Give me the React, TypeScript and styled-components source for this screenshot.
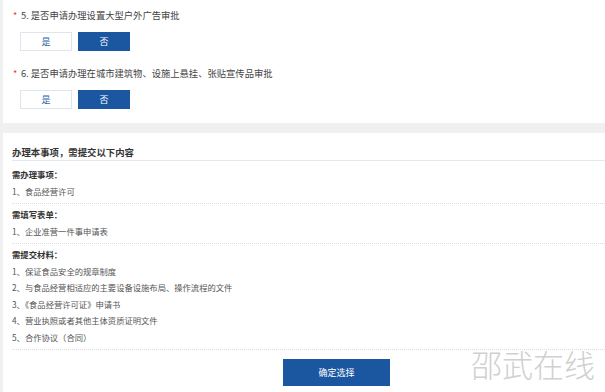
import { ReactElement } from 'react';
import styled, { createGlobalStyle } from 'styled-components';

const GlobalStyle = createGlobalStyle`
  html, body {
    margin: 0;
    padding: 0;
    background: #f0f0f0;
    font-family: "Noto Sans CJK SC", "Noto Sans", sans-serif;
    color: #333;
  }
`;

const Page = styled.div`
  position: relative;
  width: 605px;
  height: 392px;
  overflow: hidden;
  padding-left: 3px;
  box-sizing: border-box;
`;

const Card = styled.div`
  background: #fff;
`;

const QuestionCard = styled(Card)`
  height: 123px;
  padding: 8px 0 0 10px;
  box-sizing: border-box;
  margin-bottom: 10px;
`;

const Question = styled.div`
  margin-bottom: 15px;
`;

const QuestionTitle = styled.div`
  display: flex;
  align-items: center;
  height: 14px;
  font-size: 9.3px;
  color: #444;

  .star {
    color: #e5383b;
    width: 8px;
    font-size: 9px;
  }
`;

const Options = styled.div`
  display: flex;
  gap: 6px;
  margin: 10px 0 0 7px;
`;

const OptionButton = styled.button<{ $active?: boolean }>`
  width: 52px;
  height: 19px;
  padding: 0;
  font-family: inherit;
  font-size: 9px;
  border: 1px solid ${(p) => (p.$active ? '#1b56a1' : '#dfe5ec')};
  background: ${(p) => (p.$active ? '#1b56a1' : '#fff')};
  color: ${(p) => (p.$active ? '#fff' : '#2c63a8')};
`;

const InfoCard = styled(Card)`
  height: 259px;
  padding: 12px 0 0 9px;
  box-sizing: border-box;
`;

const Heading = styled.div`
  font-size: 9.4px;
  font-weight: bold;
  color: #333;
  line-height: 14px;
  padding-bottom: 1px;
  border-bottom: 1.5px solid #e2e9f1;
`;

const Section = styled.div<{ $first?: boolean }>`
  padding: ${(p) => (p.$first ? '5px' : '2px')} 0 4px;
  border-bottom: 1px dotted #dcdcdc;
`;

const SectionTitle = styled.div`
  font-size: 8.4px;
  font-weight: bold;
  color: #333;
  line-height: 16.5px;
`;

const Item = styled.div`
  font-size: 8.3px;
  color: #555;
  line-height: 16.5px;
`;

const Footer = styled.div`
  padding: 7px 0 0 271px;
`;

const ConfirmButton = styled.button`
  width: 107px;
  height: 27px;
  border: none;
  background: #1b56a1;
  color: #fff;
  font-family: inherit;
  font-size: 9px;
`;

const Watermark = styled.div`
  position: absolute;
  left: 471px;
  top: 347px;
  font-size: 31px;
  font-weight: 300;
  color: #d0d0d0;
  line-height: 34px;
`;

const questions = [
  '5. 是否申请办理设置大型户外广告审批',
  '6. 是否申请办理在城市建筑物、设施上悬挂、张贴宣传品审批',
];

const sections = [
  { title: '需办理事项：', items: ['1、食品经营许可'] },
  { title: '需填写表单：', items: ['1、企业准营一件事申请表'] },
  {
    title: '需提交材料：',
    items: [
      '1、保证食品安全的规章制度',
      '2、与食品经营相适应的主要设备设施布局、操作流程的文件',
      '3、《食品经营许可证》申请书',
      '4、营业执照或者其他主体资质证明文件',
      '5、合作协议（合同）',
    ],
  },
];

export default function App(): ReactElement {
  return (
    <Page>
      <GlobalStyle />
      <QuestionCard>
        {questions.map((q) => (
          <Question key={q}>
            <QuestionTitle>
              <span className="star">*</span>
              {q}
            </QuestionTitle>
            <Options>
              <OptionButton>是</OptionButton>
              <OptionButton $active>否</OptionButton>
            </Options>
          </Question>
        ))}
      </QuestionCard>

      <InfoCard>
        <Heading>办理本事项，需提交以下内容</Heading>
        {sections.map((s, i) => (
          <Section key={s.title} $first={i === 0}>
            <SectionTitle>{s.title}</SectionTitle>
            {s.items.map((it) => (
              <Item key={it}>{it}</Item>
            ))}
          </Section>
        ))}
        <Footer>
          <ConfirmButton>确定选择</ConfirmButton>
        </Footer>
      </InfoCard>

      <Watermark>邵武在线</Watermark>
    </Page>
  );
}
